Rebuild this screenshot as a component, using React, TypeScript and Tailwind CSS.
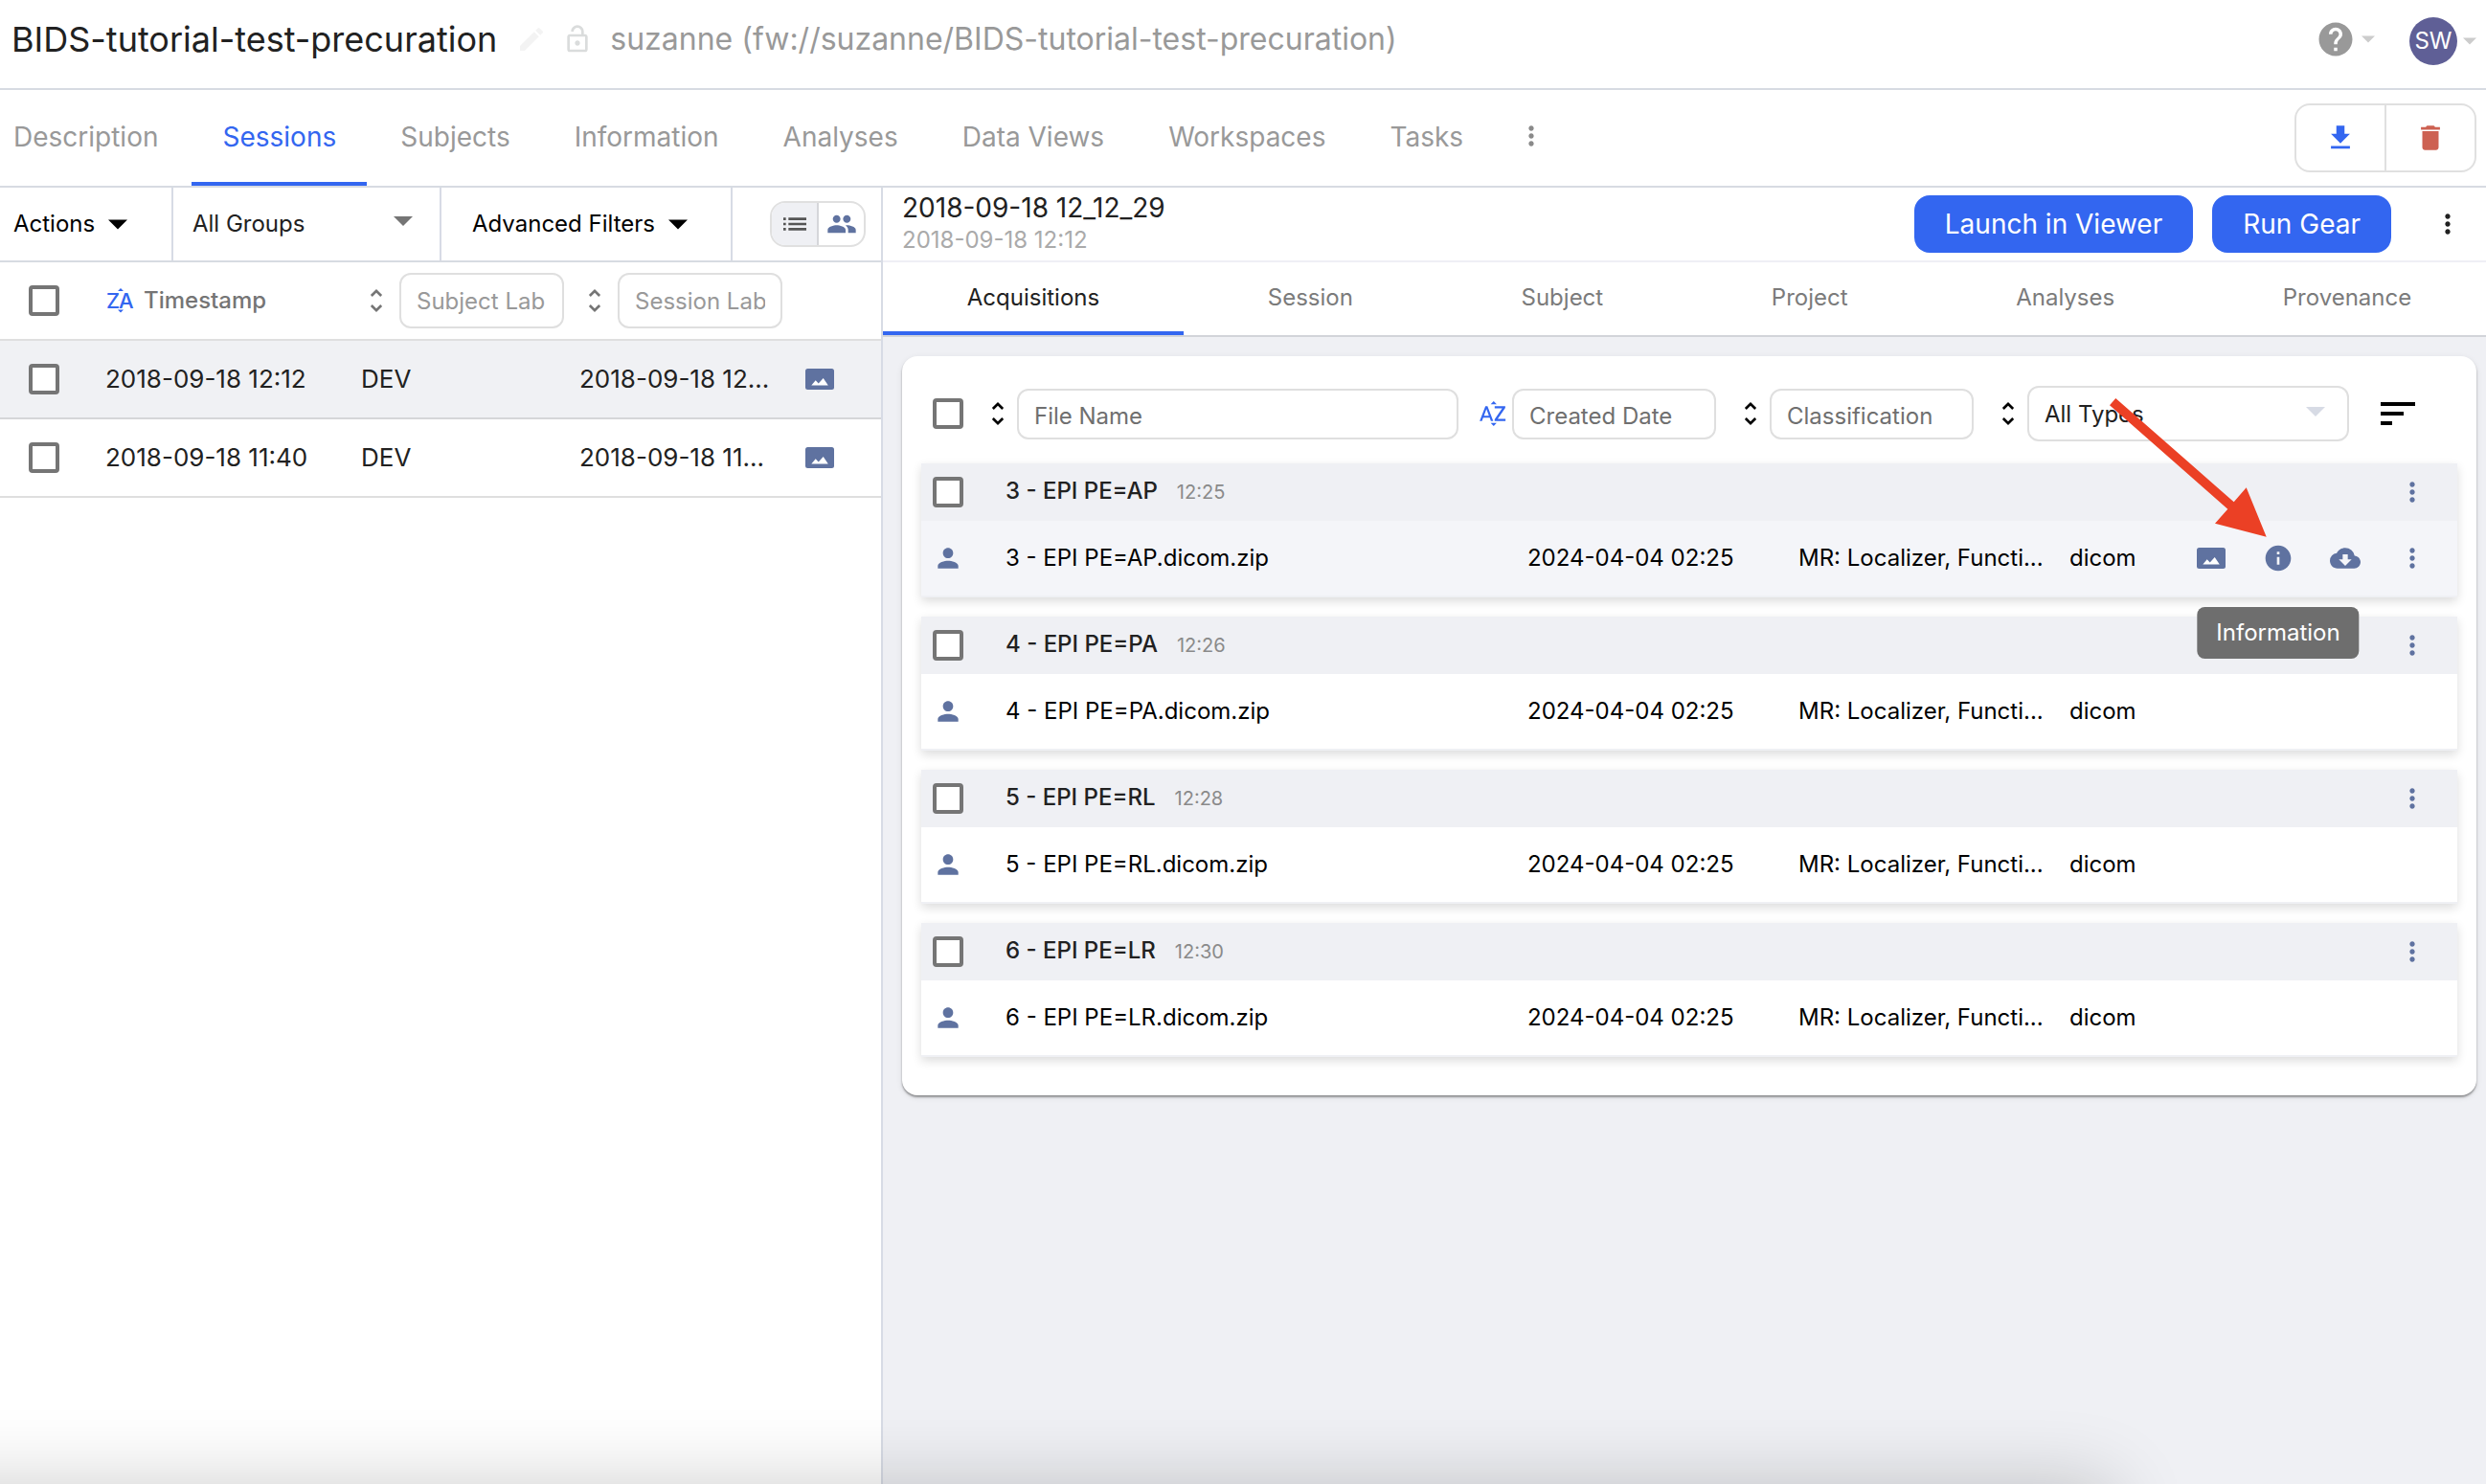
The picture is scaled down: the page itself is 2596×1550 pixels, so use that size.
import React from "react";
import {
  MdCloudDownload,
  MdDelete,
  MdEdit,
  MdGetApp,
  MdHelp,
  MdInfo,
  MdList,
  MdMoreVert,
  MdOutlineLockOpen,
  MdPeople,
  MdPerson,
  MdSort,
  MdSortByAlpha,
  MdUnfoldMore,
} from "react-icons/md";

const projectTabs = ["Description", "Sessions", "Subjects", "Information", "Analyses", "Data Views", "Workspaces", "Tasks"];
const sessionTabs = ["Acquisitions", "Session", "Subject", "Project", "Analyses", "Provenance"];

const sessions = [
  { time: "2018-09-18 12:12", subject: "DEV", label: "2018-09-18 12...", selected: true },
  { time: "2018-09-18 11:40", subject: "DEV", label: "2018-09-18 11...", selected: false },
];

const acquisitions = [
  { name: "3 - EPI PE=AP", time: "12:25", active: true },
  { name: "4 - EPI PE=PA", time: "12:26", active: false },
  { name: "5 - EPI PE=RL", time: "12:28", active: false },
  { name: "6 - EPI PE=LR", time: "12:30", active: false },
];

function Checkbox({ label }: { label: string }) {
  return (
    <input
      type="checkbox"
      aria-label={label}
      className="block size-8 shrink-0 appearance-none rounded border-4 border-[#757575] bg-white"
    />
  );
}

function Caret({ className }: { className: string }) {
  return (
    <svg viewBox="0 0 20 10" className={className} fill="currentColor" aria-hidden="true">
      <path d="M0 0h20L10 10z" />
    </svg>
  );
}

function ImageIcon() {
  return (
    <svg viewBox="0 0 30 22" className="h-[22px] w-[30px]" aria-hidden="true">
      <rect width="30" height="22" rx="2.5" fill="#5f72a0" />
      <path d="M6.3 17.4l4.4-5.2 3 3.2 5-5.4 5.1 7.4z" fill="#fff" />
    </svg>
  );
}

function DescendingIcon() {
  return (
    <svg viewBox="0 0 32 32" className="size-8 shrink-0 text-[#3366f0]" fill="currentColor" aria-hidden="true">
      <text x="1" y="24" fontSize="22" fontWeight="500" fontFamily="Inter, sans-serif">Z</text>
      <text x="14" y="24" fontSize="22" fontWeight="500" fontFamily="Inter, sans-serif">A</text>
      <path d="M13 6l3-3 3 3zM13 25.5h6l-3 3z" />
    </svg>
  );
}

function SortButton({ label, className }: { label: string; className: string }) {
  return (
    <button aria-label={label} className={className}>
      <MdUnfoldMore className="size-8" />
    </button>
  );
}

function Header() {
  return (
    <header className="flex h-[94px] items-center border-b-2 border-[#d7dbe2] pr-[10px] pb-[10px] pl-3">
      <h1 className="text-[36px] leading-[44px] text-[#212121]">BIDS-tutorial-test-precuration</h1>
      <button aria-label="Edit name" className="ml-5 text-[#f3f3f3]">
        <MdEdit className="size-8" />
      </button>
      <MdOutlineLockOpen className="ml-4 size-8 text-[#dadcdc]" />
      <span className="ml-[18px] text-[32px] leading-[44px] text-[#999]">
        suzanne (fw://suzanne/BIDS-tutorial-test-precuration)
      </span>
      <div className="ml-auto flex items-center">
        <button aria-label="Help" className="flex items-center gap-[6px] text-[#999]">
          <MdHelp className="size-[42px]" />
          <Caret className="h-2 w-[14px] text-[#ccc]" />
        </button>
        <button aria-label="Account" className="ml-9 flex items-center gap-[6px] pt-1 text-[#ccc]">
          <span className="flex size-[50px] items-center justify-center rounded-full bg-[#5f5f96] text-2xl text-white">SW</span>
          <Caret className="h-2 w-[14px]" />
        </button>
      </div>
    </header>
  );
}

function ProjectNav() {
  return (
    <nav className="flex h-[102px] border-b-2 border-[#d7dbe2] pr-[10px]">
      <div className="-ml-[18px] flex gap-[3px]">
        {projectTabs.map((tab) => (
          <button
            key={tab}
            className={
              tab === "Sessions"
                ? "border-b-4 border-[#3366f0] px-8 pt-[2px] text-[28px] leading-9 text-[#3366f0]"
                : "border-b-4 border-transparent px-8 pt-[2px] text-[28px] leading-9 text-[#999]"
            }
          >
            {tab}
          </button>
        ))}
        <button aria-label="More tabs" className="ml-5 pb-1 text-[#8a8a8a]">
          <MdMoreVert className="size-8" />
        </button>
      </div>
      <div className="my-[14px] ml-auto flex h-[72px] w-[190px] overflow-hidden rounded-2xl border-2 border-[#e0e0e0]">
        <button aria-label="Download" className="flex flex-1 items-center justify-center border-r-2 border-[#e0e0e0] text-[#3366f0]">
          <MdGetApp className="size-[34px]" />
        </button>
        <button aria-label="Delete" className="flex flex-1 items-center justify-center text-[#cd6152]">
          <MdDelete className="size-[34px]" />
        </button>
      </div>
    </nav>
  );
}

function SessionList() {
  return (
    <aside className="w-[922px] shrink-0 border-r-2 border-[#d7dbe5] text-2xl">
      <div className="flex h-[78px] border-b-2 border-[#d7dbe2]">
        <button className="flex w-[181px] items-center gap-[14px] border-r-2 border-[#d7dbe5] pl-[14px] text-black">
          Actions
          <Caret className="h-[11px] w-5" />
        </button>
        <div className="relative w-[280px] border-r-2 border-[#d7dbe5]">
          <select aria-label="Group" className="size-full appearance-none pl-5 text-[#212121]">
            <option>All Groups</option>
          </select>
          <Caret className="pointer-events-none absolute top-[30px] right-7 h-[10px] w-5 text-[#757575]" />
        </div>
        <button className="flex w-[304px] items-center gap-[14px] border-r-2 border-[#d7dbe5] pl-8 text-black">
          Advanced Filters
          <Caret className="h-[11px] w-5" />
        </button>
        <div className="my-[14px] ml-[39px] flex w-[100px] overflow-hidden rounded-2xl border-2 border-[#e0e0e0]">
          <button aria-label="List by session" className="flex flex-1 items-center justify-center border-r-2 border-[#d5d6da] bg-[#eff0f4] text-[#555]">
            <MdList className="size-8" />
          </button>
          <button aria-label="List by subject" className="flex flex-1 items-center justify-center text-[#5f72a0]">
            <MdPeople className="size-8" />
          </button>
        </div>
      </div>
      <table className="w-full table-fixed text-left text-[#212121]">
        <colgroup>
          <col className="w-[110px]" />
          <col className="w-[267px]" />
          <col className="w-[228px]" />
          <col className="w-[236px]" />
          <col />
        </colgroup>
        <thead>
          <tr className="h-[81px] border-b-2 border-[#dfdfdf]">
            <th className="pl-[30px]">
              <Checkbox label="Select all sessions" />
            </th>
            <th>
              <button className="flex items-center gap-2 font-medium text-[#757575]">
                <DescendingIcon />
                Timestamp
              </button>
            </th>
            <th className="font-normal">
              <div className="flex items-center gap-2">
                <SortButton label="Sort by subject" className="text-[#757575]" />
                <input
                  aria-label="Subject label"
                  placeholder="Subject Lab"
                  className="h-[58px] w-[172px] rounded-xl border-2 border-[#dfdfdf] px-4 placeholder:text-[#999]"
                />
              </div>
            </th>
            <th className="font-normal">
              <div className="flex items-center gap-2">
                <SortButton label="Sort by session" className="text-[#757575]" />
                <input
                  aria-label="Session label"
                  placeholder="Session Lab"
                  className="h-[58px] w-[172px] rounded-xl border-2 border-[#dfdfdf] px-4 placeholder:text-[#999]"
                />
              </div>
            </th>
            <th />
          </tr>
        </thead>
        <tbody>
          {sessions.map((s) => (
            <tr
              key={s.time}
              className={s.selected ? "h-[82px] border-b-2 border-[#d5d6d8] bg-[#f0f1f4]" : "h-[82px] border-b-2 border-[#dfdfdf]"}
            >
              <td className="pl-[30px]">
                <Checkbox label={"Select session " + s.time} />
              </td>
              <td className="text-[26px]">{s.time}</td>
              <td className="text-[26px]">{s.subject}</td>
              <td className="text-[26px]">{s.label}</td>
              <td>
                <ImageIcon />
              </td>
            </tr>
          ))}
        </tbody>
      </table>
    </aside>
  );
}

function FilterBar() {
  return (
    <div className="flex items-center gap-5 pr-[38px] pl-3 text-2xl">
      <Checkbox label="Select all acquisitions" />
      <div className="flex flex-1 items-center gap-1">
        <SortButton label="Sort by file name" className="text-black" />
        <input
          aria-label="File name"
          placeholder="File Name"
          className="h-[53px] min-w-0 flex-1 rounded-xl border-2 border-[#dfdfdf] px-4 pt-1 placeholder:text-[#6f6f6f]"
        />
      </div>
      <div className="flex items-center gap-1">
        <button aria-label="Sort by created date" className="text-[#3366f0]">
          <MdSortByAlpha className="size-8" />
        </button>
        <input
          aria-label="Created date"
          placeholder="Created Date"
          className="h-[53px] w-[213px] rounded-xl border-2 border-[#dfdfdf] px-4 pt-1 placeholder:text-[#6f6f6f]"
        />
      </div>
      <div className="flex items-center gap-1">
        <SortButton label="Sort by classification" className="text-black" />
        <input
          aria-label="Classification"
          placeholder="Classification"
          className="h-[53px] w-[213px] rounded-xl border-2 border-[#dfdfdf] px-4 pt-1 placeholder:text-[#6f6f6f]"
        />
      </div>
      <div className="flex items-center gap-1">
        <SortButton label="Sort by type" className="text-black" />
        <div className="relative">
          <select
            aria-label="File type"
            className="block h-[58px] w-[336px] appearance-none rounded-xl border-2 border-[#dfdfdf] px-4 pt-[2px] text-[#212121]"
          >
            <option>All Types</option>
          </select>
          <Caret className="pointer-events-none absolute top-[22px] right-[25px] h-[10px] w-5 text-[#d7dbe5]" />
        </div>
      </div>
      <button aria-label="Sort options" className="ml-[7px] text-black">
        <MdSort className="size-12" />
      </button>
    </div>
  );
}

function FileActions() {
  return (
    <div className="flex h-[70px] text-[#5f72a0]">
      <button aria-label="View image" className="flex w-[70px] items-center justify-center">
        <ImageIcon />
      </button>
      <div className="relative flex w-[70px]">
        <button aria-label="Information" className="flex flex-1 items-center justify-center">
          <MdInfo className="size-8" />
        </button>
        <div
          role="tooltip"
          className="absolute top-[86px] left-1/2 z-10 flex h-[54px] -translate-x-1/2 items-center rounded-lg bg-[#6e6e6e] px-5 text-2xl text-white"
        >
          Information
        </div>
        <svg
          viewBox="0 0 170 155"
          className="pointer-events-none absolute right-11 bottom-[53px] z-10 h-[155px] w-[170px] max-w-none"
          aria-hidden="true"
        >
          <path d="M9.3 6L132.7 114.3 145.7 99.3 166.7 150.7 113 136.7 126.3 121.7 3 13.3z" fill="#eb4025" />
        </svg>
      </div>
      <button aria-label="Download file" className="flex w-[70px] items-center justify-center">
        <MdCloudDownload className="size-8" />
      </button>
      <button aria-label="More file actions" className="flex w-[70px] items-center justify-center">
        <MdMoreVert className="size-8" />
      </button>
    </div>
  );
}

function Acquisition({ item }: { item: (typeof acquisitions)[number] }) {
  return (
    <table className="w-full table-fixed text-left text-2xl shadow-[0_4px_10px_rgba(0,0,0,0.14)]">
      <colgroup>
        <col className="w-[88px]" />
        <col />
        <col className="w-[283px]" />
        <col className="w-[283px]" />
        <col className="w-[113px]" />
        <col className="w-[292px]" />
      </colgroup>
      <thead>
        <tr className="h-[60px] bg-[#eff0f4]">
          <th className="pl-3">
            <Checkbox label={"Select " + item.name} />
          </th>
          <th colSpan={4} className="pb-[2px] font-medium text-[#212121]">
            {item.name}
            <span className="ml-5 text-xl font-normal text-[#8a8a8a]">{item.time}</span>
          </th>
          <th className="pr-3">
            <button aria-label={"More actions for " + item.name} className="ml-auto flex w-[70px] items-center justify-center text-[#5f72a0]">
              <MdMoreVert className="size-8" />
            </button>
          </th>
        </tr>
      </thead>
      <tbody>
        <tr className={item.active ? "h-[79px] border-b-2 border-[#eff0f4] bg-[#f4f5f9] text-black" : "h-[79px] border-b-2 border-[#eff0f4] bg-white text-black"}>
          <td className="pl-3">
            <MdPerson className="size-8 text-[#5f72a0]" />
          </td>
          <td>{item.name}.dicom.zip</td>
          <td>2024-04-04 02:25</td>
          <td>MR: Localizer, Functi...</td>
          <td>dicom</td>
          <td>{item.active && <FileActions />}</td>
        </tr>
      </tbody>
    </table>
  );
}

function SessionDetail() {
  return (
    <main className="flex min-w-0 flex-1 flex-col overflow-hidden bg-[#eff0f4]">
      <div className="flex h-[78px] items-center border-b-2 border-[#efeff5] bg-white pr-6 pl-5">
        <div>
          <h2 className="text-[28px] leading-[34px] text-[#212121]">2018-09-18 12_12_29</h2>
          <p className="text-2xl leading-[34px] text-[#aaa]">2018-09-18 12:12</p>
        </div>
        <button className="ml-auto h-[60px] rounded-2xl bg-[#3366f0] px-8 text-[28px] text-white">Launch in Viewer</button>
        <button className="ml-5 h-[60px] rounded-2xl bg-[#3366f0] px-8 text-[28px] text-white">Run Gear</button>
        <button aria-label="More session actions" className="ml-[43px] text-[#212121]">
          <MdMoreVert className="size-8" />
        </button>
      </div>
      <div className="-mr-[10px] flex h-[78px] border-b-2 border-[#d2d4d9] bg-white">
        {sessionTabs.map((tab) => (
          <button
            key={tab}
            className={
              tab === "Acquisitions"
                ? "flex-auto border-b-4 border-[#3366f0] px-12 pt-[2px] text-2xl text-[#212121]"
                : "flex-auto border-b-4 border-transparent px-12 pt-[2px] text-2xl text-[#7b7b7b]"
            }
          >
            {tab}
          </button>
        ))}
      </div>
      <section className="mt-5 mr-[10px] ml-5 rounded-2xl bg-white px-5 pt-[31px] pb-10 shadow-[0_2px_2px_rgba(0,0,0,0.35),0_2px_6px_rgba(0,0,0,0.1)]">
        <FilterBar />
        <div className="mt-[23px] flex flex-col gap-5">
          {acquisitions.map((item) => (
            <Acquisition key={item.name} item={item} />
          ))}
        </div>
      </section>
    </main>
  );
}

export default function App() {
  return (
    <div className="relative flex min-h-screen flex-col overflow-hidden bg-white font-[Inter,sans-serif]">
      <Header />
      <ProjectNav />
      <div className="flex flex-1">
        <SessionList />
        <SessionDetail />
      </div>
      <div className="pointer-events-none absolute top-full -left-24 right-[390px] h-24 shadow-[0_0_80px_rgba(0,0,0,0.2)]" />
    </div>
  );
}
